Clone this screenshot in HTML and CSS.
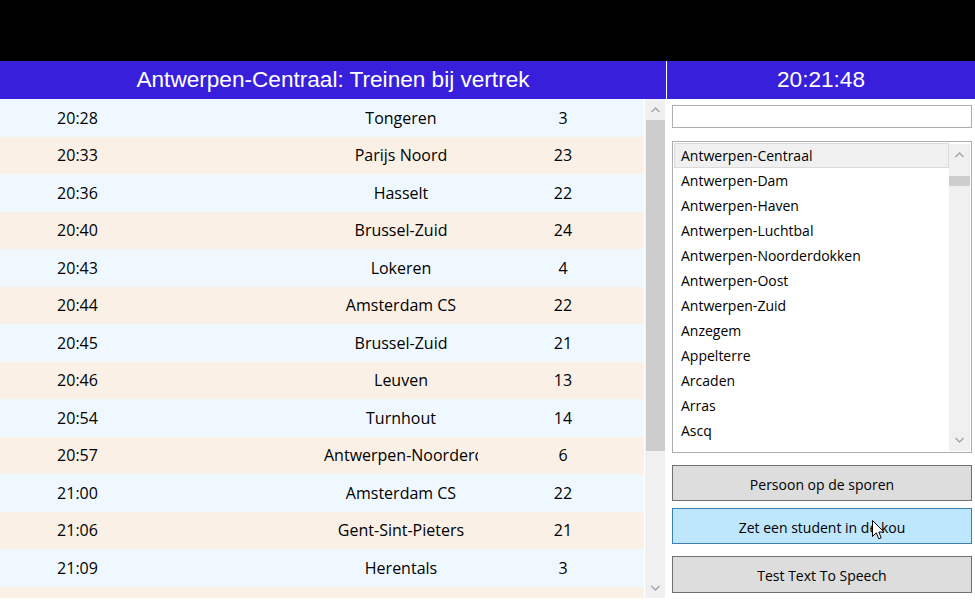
FILE: index.html
```html
<!DOCTYPE html>
<html>
<head>
<meta charset="utf-8">
<link rel="stylesheet" href="styles.css">
</head>
<body>
<div class="topbar"></div>
<div class="main">
  <section class="left">
    <div class="hdr">Antwerpen-Centraal: Treinen bij vertrek</div>
    <div class="board">
      <div class="rows">
        <div class="row a"><span class="c-time">20:28</span><span class="c-sp"></span><span class="c-dest">Tongeren</span><span class="c-pl">3</span></div>
        <div class="row b"><span class="c-time">20:33</span><span class="c-sp"></span><span class="c-dest">Parijs Noord</span><span class="c-pl">23</span></div>
        <div class="row a"><span class="c-time">20:36</span><span class="c-sp"></span><span class="c-dest">Hasselt</span><span class="c-pl">22</span></div>
        <div class="row b"><span class="c-time">20:40</span><span class="c-sp"></span><span class="c-dest">Brussel-Zuid</span><span class="c-pl">24</span></div>
        <div class="row a"><span class="c-time">20:43</span><span class="c-sp"></span><span class="c-dest">Lokeren</span><span class="c-pl">4</span></div>
        <div class="row b"><span class="c-time">20:44</span><span class="c-sp"></span><span class="c-dest">Amsterdam CS</span><span class="c-pl">22</span></div>
        <div class="row a"><span class="c-time">20:45</span><span class="c-sp"></span><span class="c-dest">Brussel-Zuid</span><span class="c-pl">21</span></div>
        <div class="row b"><span class="c-time">20:46</span><span class="c-sp"></span><span class="c-dest">Leuven</span><span class="c-pl">13</span></div>
        <div class="row a"><span class="c-time">20:54</span><span class="c-sp"></span><span class="c-dest">Turnhout</span><span class="c-pl">14</span></div>
        <div class="row b"><span class="c-time">20:57</span><span class="c-sp"></span><span class="c-dest clip">Antwerpen-Noorderdokken</span><span class="c-pl">6</span></div>
        <div class="row a"><span class="c-time">21:00</span><span class="c-sp"></span><span class="c-dest">Amsterdam CS</span><span class="c-pl">22</span></div>
        <div class="row b"><span class="c-time">21:06</span><span class="c-sp"></span><span class="c-dest">Gent-Sint-Pieters</span><span class="c-pl">21</span></div>
        <div class="row a"><span class="c-time">21:09</span><span class="c-sp"></span><span class="c-dest">Herentals</span><span class="c-pl">3</span></div>
        <div class="row b"><span class="c-time">21:12</span><span class="c-sp"></span><span class="c-dest">Blankenberge</span><span class="c-pl">21</span></div>
      </div>
      <div class="vscroll">
        <div class="sb-btn"><svg width="9" height="6" viewBox="0 0 9 6"><polyline points="0.5,5 4.5,1 8.5,5" fill="none" stroke="#a3a3a3" stroke-width="1.4"/></svg></div>
        <div class="sb-thumb big"></div>
        <div class="sb-track"></div>
        <div class="sb-btn"><svg width="9" height="6" viewBox="0 0 9 6"><polyline points="0.5,1 4.5,5 8.5,1" fill="none" stroke="#a3a3a3" stroke-width="1.4"/></svg></div>
      </div>
    </div>
  </section>
  <section class="right">
    <div class="hdr">20:21:48</div>
    <div class="panel">
      <div class="textbox"></div>
      <div class="listbox">
        <div class="items">
          <div class="item sel">Antwerpen-Centraal</div>
          <div class="item">Antwerpen-Dam</div>
          <div class="item">Antwerpen-Haven</div>
          <div class="item">Antwerpen-Luchtbal</div>
          <div class="item">Antwerpen-Noorderdokken</div>
          <div class="item">Antwerpen-Oost</div>
          <div class="item">Antwerpen-Zuid</div>
          <div class="item">Anzegem</div>
          <div class="item">Appelterre</div>
          <div class="item">Arcaden</div>
          <div class="item">Arras</div>
          <div class="item">Ascq</div>
          <div class="item">Asse</div>
        </div>
        <div class="vscroll small">
          <div class="sb-btn s"><svg width="9" height="6" viewBox="0 0 9 6"><polyline points="0.5,5 4.5,1 8.5,5" fill="none" stroke="#a3a3a3" stroke-width="1.4"/></svg></div>
          <div class="sb-thumb tiny"></div>
          <div class="sb-track"></div>
          <div class="sb-btn s"><svg width="9" height="6" viewBox="0 0 9 6"><polyline points="0.5,1 4.5,5 8.5,1" fill="none" stroke="#a3a3a3" stroke-width="1.4"/></svg></div>
        </div>
      </div>
      <button class="btn b1">Persoon op de sporen</button>
      <div class="btn-wrap">
        <button class="btn b2 hover">Zet een student in de kou</button>
        <svg class="cursor" width="13" height="20" viewBox="0 0 13 20"><path d="M0.5,0.5 L0.5,16.5 L4.3,12.8 L6.8,18.8 L9.2,17.8 L6.8,12 L12,12 Z" fill="#fff" stroke="#000" stroke-width="1" stroke-linejoin="miter"/></svg>
      </div>
      <button class="btn b3">Test Text To Speech</button>
    </div>
  </section>
</div>
</body>
</html>
```

FILE: styles.css
```css
* { box-sizing: border-box; }
html, body { margin: 0; padding: 0; background: #ffffff; }
body {
  width: 975px;
  height: 610px;
  overflow: hidden;
  font-family: "Open Sans", "Noto Sans", sans-serif;
  color: #000;
}
.topbar { height: 61px; background: #000; }
.main {
  display: grid;
  grid-template-columns: 666px 1fr;
  column-gap: 1px;
  background: #fff;
}
.hdr {
  height: 38px;
  background: #381fdb;
  color: #fff;
  font-family: "Liberation Sans", Arial, sans-serif;
  font-size: 22.6px;
  display: flex;
  align-items: center;
  justify-content: center;
  padding-bottom: 1px;
}
.board {
  display: flex;
  height: 499px;
}
.rows {
  width: 644px;
  height: 499px;
  overflow: hidden;
  margin-right: 1px;
}
.row {
  height: 37.5px;
  display: grid;
  grid-template-columns: 155px 169px 154px 170px;
  align-items: center;
  font-size: 16px;
  white-space: nowrap;
}
.row.a { background: #f0f8ff; }
.row.b { background: #faf0e6; }
.row span { text-align: center; overflow: hidden; }
.c-dest.clip { text-align: left; }
.vscroll {
  width: 20px;
  height: 499px;
  background: #f0f0f0;
  display: flex;
  flex-direction: column;
}
.sb-btn {
  height: 21px;
  display: flex;
  align-items: center;
  justify-content: center;
}
.sb-thumb.big { height: 331px; background: #cdcdcd; margin: 0 0 0 1px; }
.sb-track { flex: 1; }
.panel {
  padding: 6px 3px 0 5px;
  display: flex;
  flex-direction: column;
}
.textbox {
  height: 23px;
  border: 1px solid #abadb3;
  background: #fff;
}
.listbox {
  margin-top: 13px;
  height: 312px;
  border: 1px solid #abadb3;
  display: flex;
  padding: 1px;
  overflow: hidden;
}
.items {
  flex: 1;
  overflow: hidden;
}
.item {
  height: 25px;
  line-height: 23px;
  padding-left: 6px;
  font-size: 14px;
  border: 1px solid transparent;
  white-space: nowrap;
}
.item.sel { background: #f0f0f0; border-color: #dadada; }
.vscroll.small {
  width: 21px;
  height: auto;
  margin-top: 1px;
}
.sb-btn.s { height: 22px; }
.sb-thumb.tiny { height: 10px; margin-top: 10px; background: #cdcdcd; }
.btn {
  display: block;
  width: 100%;
  font-family: "Open Sans", "Noto Sans", sans-serif;
  font-size: 14px;
  color: #000;
  background: #dddddd;
  border: 1px solid #707070;
  padding: 2px 0 0 0;
  margin: 0;
}
.b1 { margin-top: 12px; height: 36px; }
.btn-wrap { position: relative; margin-top: 7px; }
.b2 { height: 36px; background: #bee6fd; border-color: #3c7fb1; }
.b3 { margin-top: 12px; height: 37px; }
.cursor { position: absolute; left: 200px; top: 12px; }
```
